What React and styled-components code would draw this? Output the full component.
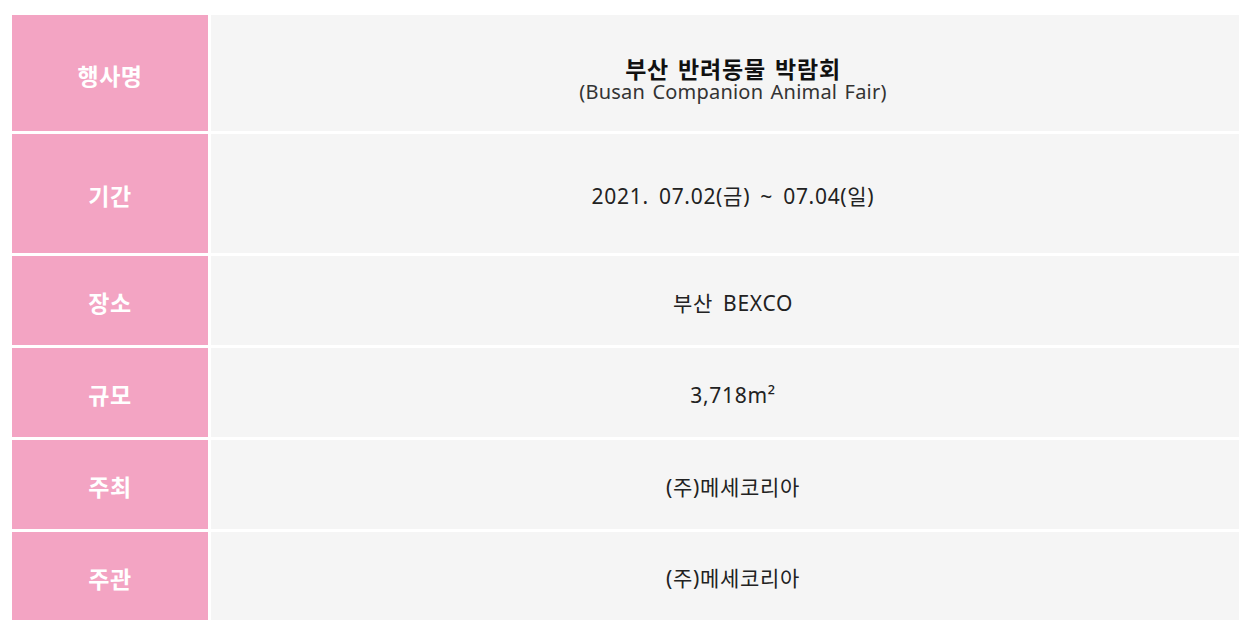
import React from "react";
import styled, { createGlobalStyle } from "styled-components";

const GlobalStyle = createGlobalStyle`
  html, body { margin: 0; padding: 0; background: #ffffff; }
  body { font-family: "Noto Sans", "Noto Sans CJK KR", sans-serif; }
`;

const Page = styled.div`
  width: 1250px;
  height: 636px;
  box-sizing: border-box;
  padding: 15px 11px 15px 12px;
  background: #ffffff;
`;

const InfoTable = styled.div`
  display: flex;
  flex-direction: column;
  gap: 3px;
`;

const Row = styled.div`
  display: grid;
  grid-template-columns: 196px 1fr;
  column-gap: 3px;
  height: ${(p) => p.$h}px;
`;

const Label = styled.div`
  background: #f3a4c3;
  color: #ffffff;
  display: flex;
  align-items: center;
  justify-content: center;
  box-sizing: border-box;
  padding-top: 3px;
  font-family: "Noto Sans CJK KR", sans-serif;
  font-weight: 700;
  font-size: 23px;
  letter-spacing: 0.5px;
`;

const Value = styled.div`
  background: #f5f5f5;
  color: #222222;
  display: flex;
  flex-direction: column;
  align-items: center;
  justify-content: center;
  box-sizing: border-box;
  padding-left: 16px;
  padding-top: ${(p) => p.$pt}px;
`;

const Title = styled.div`
  font-family: "Noto Sans CJK KR", sans-serif;
  font-weight: 700;
  font-size: 23px;
  line-height: 22px;
  color: #111111;
  letter-spacing: 0.8px;
  word-spacing: 3px;
  margin-bottom: 2px;
`;

const Subtitle = styled.div`
  font-size: 20px;
  line-height: 22px;
  color: #333333;
  letter-spacing: 0.2px;
  word-spacing: 2px;
`;

const Text = styled.div`
  font-size: 21px;
  line-height: 24px;
  color: #222222;
  letter-spacing: 0.7px;
  word-spacing: 4px;
`;

const rows = [
  { label: "행사명", h: 116, pt: 14, title: "부산 반려동물 박람회", sub: "(Busan Companion Animal Fair)" },
  { label: "기간", h: 119, pt: 4, text: "2021. 07.02(금) ~ 07.04(일)" },
  { label: "장소", h: 89, pt: 4, text: "부산 BEXCO" },
  { label: "규모", h: 89, pt: 4, text: "3,718m²" },
  { label: "주최", h: 89, pt: 4, text: "(주)메세코리아" },
  { label: "주관", h: 88, pt: 4, text: "(주)메세코리아" },
];

export default function App() {
  return (
    <Page>
      <GlobalStyle />
      <InfoTable>
        {rows.map((r) => (
          <Row key={r.label} $h={r.h}>
            <Label>{r.label}</Label>
            <Value $pt={r.pt}>
              {r.title ? (
                <>
                  <Title>{r.title}</Title>
                  <Subtitle>{r.sub}</Subtitle>
                </>
              ) : (
                <Text>{r.text}</Text>
              )}
            </Value>
          </Row>
        ))}
      </InfoTable>
    </Page>
  );
}
